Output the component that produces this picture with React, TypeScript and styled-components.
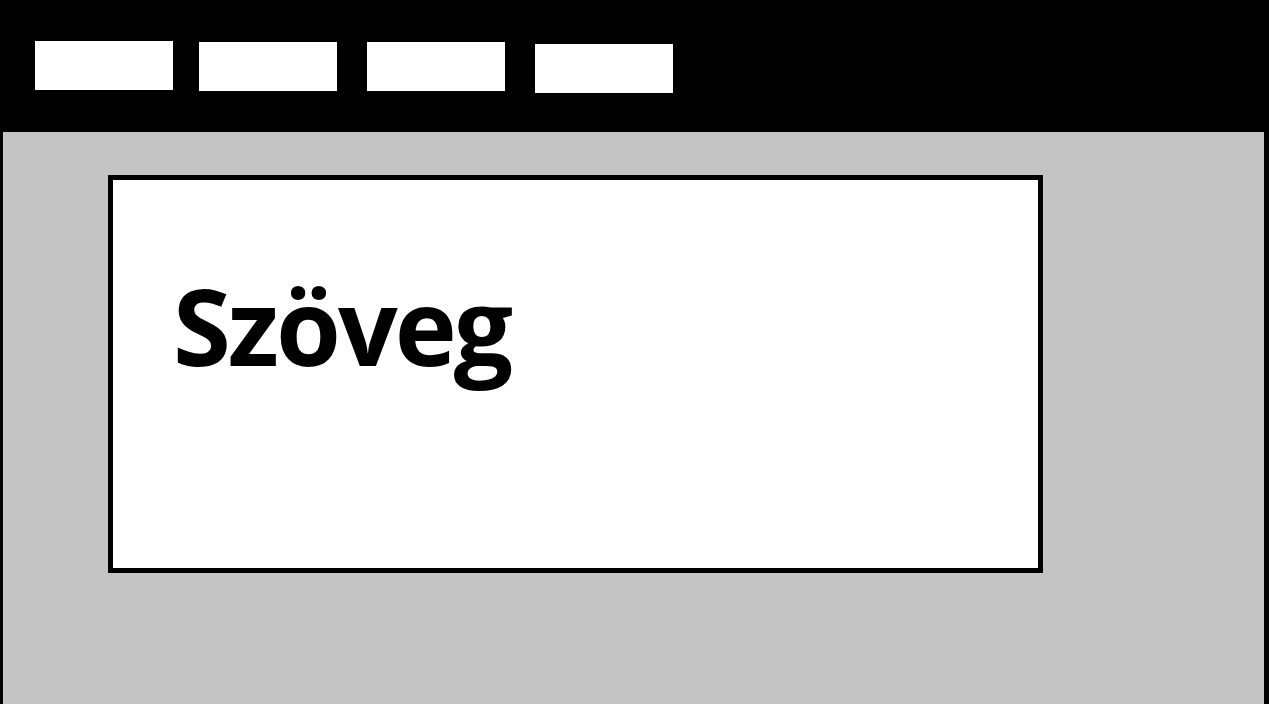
import React from 'react';
import styled, { createGlobalStyle } from 'styled-components';

const GlobalStyle = createGlobalStyle`
  html, body {
    margin: 0;
    padding: 0;
    background: #c4c4c4;
  }

  body {
    font-family: 'Open Sans', 'Liberation Sans', sans-serif;
  }
`;

const Page = styled.div`
  display: flex;
  flex-direction: column;
  width: 1269px;
  height: 704px;
  overflow: hidden;
`;

const Header = styled.header`
  display: flex;
  align-items: flex-start;
  height: 132px;
  padding-left: 35px;
  box-sizing: border-box;
  background: #000;
  flex: 0 0 132px;
`;

const NavButton = styled.div<{ $top: number; $gap: number }>`
  width: 138px;
  height: 49px;
  margin-top: ${(p) => p.$top}px;
  margin-left: ${(p) => p.$gap}px;
  background: #fff;
`;

const Main = styled.main`
  flex: 1;
  background: #c4c4c4;
  border-left: 3px solid #000;
  border-right: 5px solid #000;
  padding: 43px 0 0 105px;
`;

const Card = styled.section`
  box-sizing: border-box;
  width: 935px;
  height: 398px;
  border: 5px solid #000;
  background: #fff;
  padding: 93px 0 0 60px;
`;

const Title = styled.h1`
  margin: 0;
  font-size: 105px;
  line-height: 1;
  font-weight: 700;
  color: #000;
  letter-spacing: -3px;
`;

const buttons = [
  { top: 41, gap: 0 },
  { top: 42, gap: 26 },
  { top: 42, gap: 30 },
  { top: 44, gap: 30 },
];

function App() {
  return (
    <>
      <GlobalStyle />
      <Page>
        <Header>
          {buttons.map((b, i) => (
            <NavButton key={`nav-${i}`} $top={b.top} $gap={b.gap} />
          ))}
        </Header>
        <Main>
          <Card>
            <Title>Szöveg</Title>
          </Card>
        </Main>
      </Page>
    </>
  );
}

export default App;
